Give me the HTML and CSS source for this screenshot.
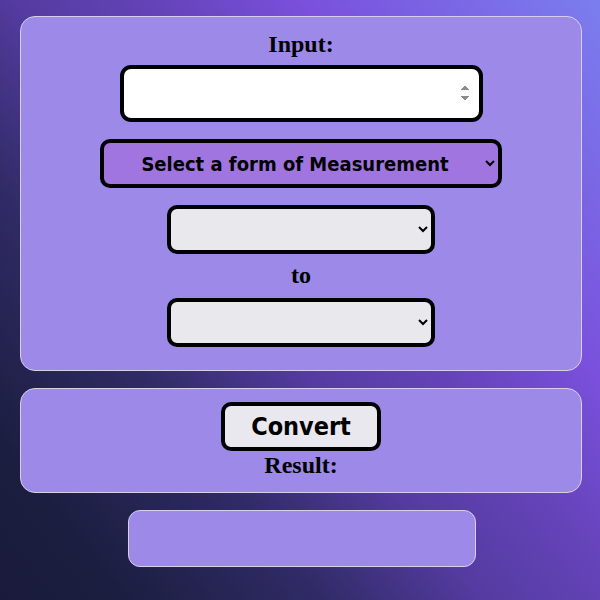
FILE: index.html
```html
<!DOCTYPE html>
<html>
<head>
<meta charset="utf-8">
<link rel="stylesheet" href="styles.css">
</head>
<body>
<main class="page">
  <section class="card card-input">
    <h2 class="label">Input:</h2>
    <input class="num" type="number">
    <select class="sel sel-type">
      <option>Select a form of Measurement</option>
    </select>
    <select class="sel sel-unit"><option></option></select>
    <h2 class="label label-to">to</h2>
    <select class="sel sel-unit"><option></option></select>
  </section>
  <section class="card card-convert">
    <button class="btn">Convert</button>
    <h2 class="label label-result">Result:</h2>
  </section>
  <div class="result-box"></div>
</main>
</body>
</html>
```
FILE: styles.css
```css
html, body {
  margin: 0;
  height: 100%;
}
body {
  background: linear-gradient(52deg, #1a1b3b 0%, #1c1e41 12%, #302b66 30%, #543ba0 45%, #6443b8 58%, #7a50dc 72%, #7b7eee 100%);
  font-family: "Liberation Serif", serif;
  overflow: hidden;
}
.page {
  display: flex;
  flex-direction: column;
  align-items: center;
  padding: 16px 18px 0 20px;
}
.card {
  box-sizing: border-box;
  width: 562px;
  background: #9d8ae8;
  border: 1px solid #d6d0ea;
  border-radius: 15px;
  display: flex;
  flex-direction: column;
  align-items: center;
}
.card-input {
  height: 355px;
  padding-top: 13px;
}
.card-convert {
  margin-top: 17px;
  height: 105px;
  padding-top: 13px;
}
.label {
  margin: 0;
  font-size: 24px;
  font-weight: bold;
  line-height: 28px;
  color: #000;
}
.num {
  box-sizing: border-box;
  margin-top: 7px;
  width: 363px;
  height: 57px;
  border: 4px solid #000;
  border-radius: 11px;
  background: #fff;
  padding: 0 6px;
  font-size: 18px;
}
.num::-webkit-inner-spin-button {
  opacity: 1;
}
.sel {
  box-sizing: border-box;
  border: 4px solid #000;
  border-radius: 10px;
  height: 49px;
  font-family: "DejaVu Sans Condensed", "DejaVu Sans", sans-serif;
  font-weight: bold;
  color: #000;
  text-align: center;
}
.sel-type {
  margin-top: 17px;
  width: 402px;
  background-color: #a075e0;
  font-size: 20px;
}
.sel-unit {
  width: 268px;
  background-color: #e9e8ed;
  font-size: 18px;
}
.sel-type + .sel-unit {
  margin-top: 17px;
}
.label-to {
  margin: 7px 0 9px;
}
.btn {
  box-sizing: border-box;
  width: 160px;
  height: 49px;
  border: 4px solid #000;
  border-radius: 10px;
  background: #e9e8ee;
  font-family: "DejaVu Sans Condensed", "DejaVu Sans", sans-serif;
  font-weight: bold;
  font-size: 25px;
  color: #000;
  padding: 0;
}
.label-result {
  margin-top: 0;
}
.result-box {
  box-sizing: border-box;
  margin-top: 17px;
  margin-left: 2px;
  width: 348px;
  height: 57px;
  background: #9d8ae8;
  border: 1px solid #d6d0ea;
  border-radius: 12px;
}
```
